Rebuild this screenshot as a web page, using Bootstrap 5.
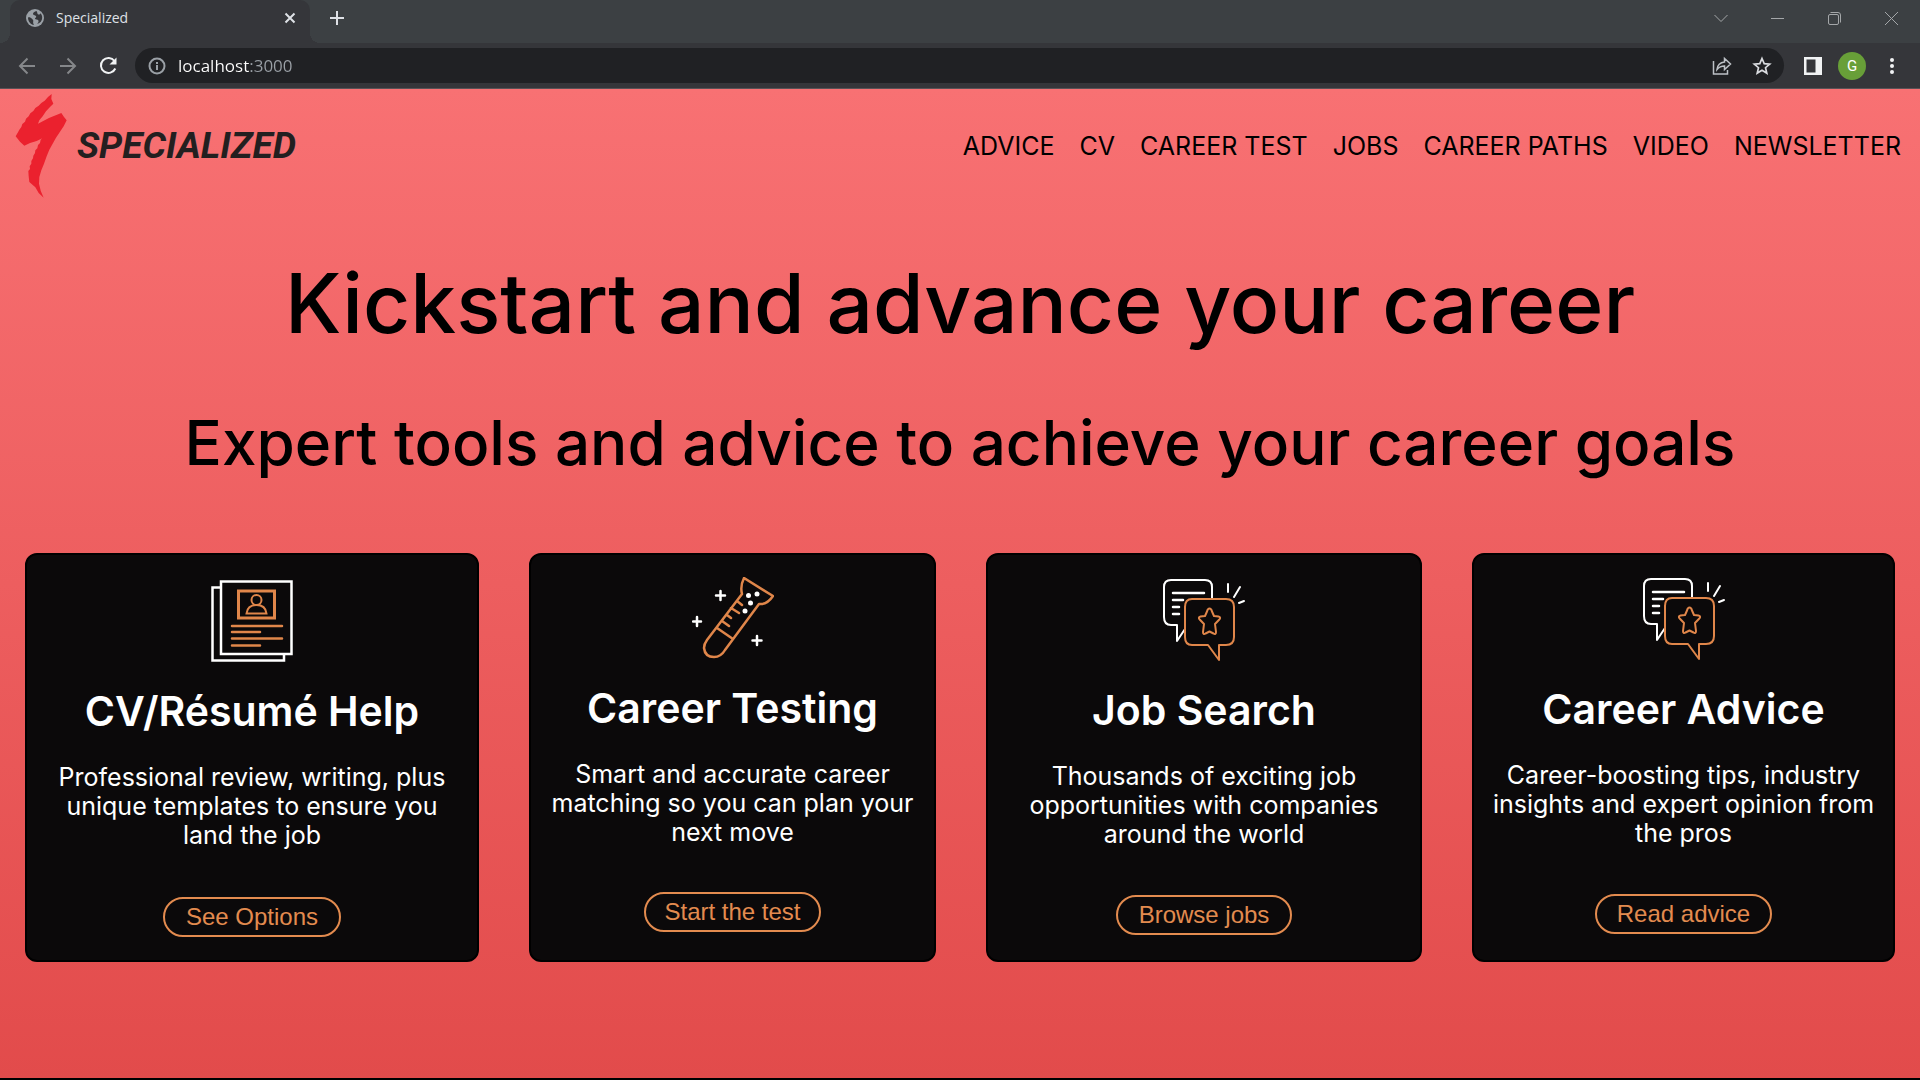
<!DOCTYPE html>
<html lang="en">
<head>
<meta charset="utf-8">
<meta name="viewport" content="width=device-width, initial-scale=1">
<title>Specialized</title>
<link href="https://cdn.jsdelivr.net/npm/bootstrap@5.3.0/dist/css/bootstrap.min.css" rel="stylesheet">
<style>
  body { font-family: Inter, "Open Sans", sans-serif; color: #000; background: #35363a; }
  svg { display: block; flex: none; }

  /* browser window */
  .tab-strip { background: #3c4043; height: 43px; padding-left: 10px; }
  .page-tab { position: relative; width: 300px; background: #35363a; border-radius: 10px 10px 0 0; padding: 0 13px 0 16px; color: #dee1e6; font: 14px/20px "Open Sans", sans-serif; }
  .page-tab::before, .page-tab::after { content: ""; position: absolute; bottom: 0; width: 10px; height: 10px; }
  .page-tab::before { right: 100%; background: radial-gradient(circle at 0 0, #3c4043 10px, #35363a 10px); }
  .page-tab::after { left: 100%; background: radial-gradient(circle at 100% 0, #3c4043 10px, #35363a 10px); }
  .tool-btn { background: none; border: 0; padding: 0; display: flex; align-items: center; justify-content: center; flex: none; }
  .win-btn { width: 57px; height: 36px; }
  .toolbar-row { background: #35363a; height: 46px; padding: 0 26px 0 16px; border-bottom: 1px solid #5a5256; }
  .nav-icons { width: 119px; gap: 19px; }
  .address-bar { background: #202124; height: 35px; border-radius: 18px; padding: 0 12px 0 13px; }
  .address-input { border: 0; outline: 0; padding: 0; min-width: 0; font: 17px/24px "Open Sans", sans-serif; color: transparent; -webkit-background-clip: text; background-clip: text; background-image: linear-gradient(90deg, #fff 76px, #9aa0a6 76px); }
  .avatar-btn { width: 28px; height: 28px; border-radius: 50%; background: #689f38; color: #fff; font: 15px/28px Roboto, sans-serif; }

  /* site */
  .site { background: linear-gradient(#f87173, #e24b4b); border-bottom: 2px solid #000; }
  .site-header { padding: 4px 19px 4px 15px; }
  .brand-link { color: #231f20; gap: 9px; text-decoration: none; }
  .wordmark { font: italic bold 37px/44px Roboto, "Liberation Sans", sans-serif; }
  .site-nav { gap: 25px; }
  .site-nav a { color: #000; text-decoration: none; font-size: 25px; line-height: 30px; }
  .hero-title { font-size: 82px; line-height: 98px; font-weight: 500; margin: 52px 0; }
  .hero-sub { font-size: 62px; line-height: 76px; font-weight: 500; margin: 0 0 72px; }
  .tile-grid { display: grid; grid-template-columns: 454fr 407fr 436fr 423fr; gap: 50px; padding: 0 25px; }
  .tile { background: #0b090a; border: 2px solid #000; border-radius: 12px; padding: 5% 14px; color: #fff; }
  .tile-cell { display: flex; }
  .tile-icon { margin: 2px 0 25px; }
  .tile-title { font-size: 41px; line-height: 49px; font-weight: 600; margin: 0 0 27px; }
  .tile-text { font-size: 25px; line-height: 29px; margin: 0 0 26px; }
  .tile-btn { margin-top: 5%; padding: 1% 5%; border: 2px solid #e38b4f; border-radius: 20px; background: none; color: #e38b4f; font: 24px/28px "Liberation Sans", Arial, sans-serif; }
</style>
</head>
<body class="min-vh-100 d-flex flex-column">

<svg width="0" height="0" class="position-absolute" aria-hidden="true">
  <symbol id="chat-star" viewBox="0 0 82 82">
    <g fill="none" stroke-linecap="round" stroke-linejoin="round" stroke-width="2">
      <g stroke="#fff">
        <path d="M49 19V8q0-7-7-7H8Q1 1 1 8v30q0 8 7 8h6v16l8-12"/>
        <path stroke-width="2.500" d="M10 14h31M10 21h10M10 28h6M10 35h6"/>
        <path d="M65 5v8M77 8l-6 10M76 24l5-2"/>
      </g>
      <g stroke="#e0864a">
        <path d="M29 20h34q8 0 8 8v30q0 8-8 8h-7v15L45 66H29q-7 0-7-8V28q0-8 7-8z"/>
        <path d="M46.500 29.500c1 0 2 1 2.500 3l2 4.500 4.500.5c2 .3 2 2 .8 3L52 45l1 8c0 2-1 2.500-2.500 1.500l-4-2-4 2C41 55.500 40 55 40 53l1-8-4.300-4.500c-1.200-1-1.200-2.700.8-3l4.500-.5 2-4.500C44.500 30.500 45.500 29.500 46.500 29.500z"/>
      </g>
    </g>
  </symbol>
</svg>

<div class="tab-strip d-flex">
  <div class="page-tab d-flex align-items-center pb-2">
    <svg width="18" height="18" viewBox="0 0 18 18"><circle cx="9" cy="9" r="9" fill="#9aa0a6"/><path d="M10.500 2c-2 .6-3.600 1.500-3.500 3 .2 1.600 3 1 3.200 2.500.2 1-1.500 1.300-1.200 2.300.4 1.200 2.700.4 3.400 1.700.5 1-.2 2.300-1.200 3.500 3-.8 5-3.200 5-6.200 0-1.700-.6-3.200-1.700-4.500-.3 1-1.200 1.500-2.200 1.200C11 5.100 11.600 3 10.500 2zM2 8.500c1.500-.5 3 .2 4 1.300 1 1 1.700 1.700 1.200 3C6.900 14 7.500 15 8 16 4.500 15.600 2 12.500 2 8.500z" fill="#35363a"/></svg>
    <span class="ms-2 ps-1 me-auto">Specialized</span>
    <button class="tool-btn" aria-label="Close tab"><svg width="14" height="14" viewBox="0 0 14 14" stroke="#dee1e6" stroke-width="2"><path d="M2.500 2.500l9 9M11.500 2.500l-9 9"/></svg></button>
  </div>
  <button class="tool-btn ms-3 ps-1 pb-2" aria-label="New tab"><svg width="14" height="14" viewBox="0 0 14 14" stroke="#dee1e6" stroke-width="2"><path d="M7 0v14M0 7h14"/></svg></button>
  <div class="d-flex ms-auto">
    <button class="tool-btn win-btn" aria-label="Search tabs"><svg width="14" height="14" viewBox="0 0 14 14" fill="none" stroke="#a4a7a9"><path d="M.5 4L7 10.500 13.500 4"/></svg></button>
    <button class="tool-btn win-btn" aria-label="Minimize"><svg width="13" height="13" viewBox="0 0 13 13" stroke="#a4a7a9"><path d="M0 6.500h13"/></svg></button>
    <button class="tool-btn win-btn" aria-label="Restore"><svg width="13" height="13" viewBox="0 0 13 13" fill="none" stroke="#a4a7a9"><rect x=".5" y="2.500" width="10" height="10" rx="1.500"/><path d="M2.500.5H10q2.500 0 2.500 2.500v7.500"/></svg></button>
    <button class="tool-btn win-btn" aria-label="Close window"><svg width="13" height="13" viewBox="0 0 13 13" stroke="#a4a7a9"><path d="M0 0l13 13M13 0L0 13"/></svg></button>
  </div>
</div>

<div class="toolbar-row d-flex align-items-center">
  <div class="nav-icons d-flex">
    <button class="tool-btn" aria-label="Back"><svg width="22" height="22" viewBox="0 0 22 22" fill="none" stroke="#85878a" stroke-width="2"><path d="M19 11H4M11.500 3.500L4 11l7.500 7.500"/></svg></button>
    <button class="tool-btn" aria-label="Forward"><svg width="22" height="22" viewBox="0 0 22 22" fill="none" stroke="#85878a" stroke-width="2"><path d="M3 11h15M10.500 3.500L18 11l-7.500 7.500"/></svg></button>
    <button class="tool-btn" aria-label="Reload"><svg width="20" height="20" viewBox="0 0 20 20" fill="none" stroke="#f1f3f4" stroke-width="2"><path d="M16.500 5A7.500 7.500 0 1 0 17.300 12.500"/><path d="M18.500 1.500V8.500H11.500z" fill="#f1f3f4" stroke="none"/></svg></button>
  </div>
  <div class="address-bar d-flex align-items-center flex-grow-1">
    <svg width="18" height="18" viewBox="0 0 18 18" fill="none" stroke="#9aa0a6" stroke-width="2"><circle cx="9" cy="9" r="7.500"/><path d="M9 8v5M9 5v2"/></svg>
    <input class="address-input flex-grow-1 ms-2 ps-1" type="text" value="localhost:3000" aria-label="Address">
    <button class="tool-btn" aria-label="Share"><svg width="20" height="20" viewBox="0 0 20 20" fill="none" stroke="#bdc1c6" stroke-width="1.500"><path d="M1.500 5v13h14v-4"/><path d="M5 13.500C5.500 9 8 6.500 12.500 6V2.500L18.500 8l-6 5.500V10C9 10 7 11 5 13.500z"/></svg></button>
    <button class="tool-btn ms-3 ps-1" aria-label="Bookmark"><svg width="20" height="20" viewBox="0 0 20 20" fill="none" stroke="#dadce0" stroke-width="1.700"><path d="M10 2.500l2.200 5.100 5.500.5-4.200 3.600 1.300 5.400L10 14.200l-4.800 2.900 1.300-5.400L2.300 8.100l5.500-.5z"/></svg></button>
  </div>
  <button class="tool-btn ms-3 ps-1" aria-label="Side panel"><svg width="18" height="18" viewBox="0 0 18 18" fill="#f1f3f4"><path fill-rule="evenodd" d="M0 0h18v18H0zM2.500 2.500v13h9v-13z"/></svg></button>
  <button class="tool-btn avatar-btn ms-3" aria-label="Profile">G</button>
  <button class="tool-btn ms-4" aria-label="Menu"><svg width="4" height="18" viewBox="0 0 4 18" fill="#f1f3f4"><circle cx="2" cy="3" r="2"/><circle cx="2" cy="9" r="2"/><circle cx="2" cy="15" r="2"/></svg></button>
</div>

<div class="site flex-grow-1">
  <header class="site-header d-flex align-items-center justify-content-between">
    <a href="#" class="brand-link d-flex align-items-center">
      <svg width="53" height="106" viewBox="45 280 159 318" fill="#eb212e"><path d="M155 283L154 298 160 312 150 322 138 335 128 350 118 362 114 372Q145 354 184 340L192 352 200 362 191 380 180 396 168 414 158 432 148 450 140 470 132 492 124 512 118 532 117 552Q120 572 131 594L116 580 106 563 88 547 86 530 85 514 90 508 89 500 94 492 94 484 99 476 100 468 105 460 106 452 112 446 114 436 120 430 122 420 127 416 110 424 90 430 73 438 60 426 47 410 54 398 58 390 64 382 67 373 75 366 78 357 86 350 91 341 100 334 106 325 116 318 124 310 134 303 144 292Z"/></svg>
      <span class="wordmark">SPECIALIZED</span>
    </a>
    <nav class="site-nav d-flex">
      <a href="#">ADVICE</a>
      <a href="#">CV</a>
      <a href="#">CAREER TEST</a>
      <a href="#">JOBS</a>
      <a href="#">CAREER PATHS</a>
      <a href="#">VIDEO</a>
      <a href="#">NEWSLETTER</a>
    </nav>
  </header>

  <main class="text-center">
    <h1 class="hero-title">Kickstart and advance your career</h1>
    <h2 class="hero-sub">Expert tools and advice to achieve your career goals</h2>

    <div class="tile-grid">
      <div class="tile-cell">
        <section class="tile w-100">
          <svg class="tile-icon mx-auto" width="82" height="82" viewBox="0 0 82 82" fill="none" stroke-width="2">
            <path stroke="#fff" stroke-width="2.500" d="M9 7.500H1.500v73H73V75M10 1.500h70.500V74H10z"/>
            <g stroke="#e0864a" stroke-linecap="round"><path stroke-width="3" d="M27.500 11h36v27h-36z"/><circle cx="45.500" cy="20" r="5"/><path d="M35.500 33.500q1-8.500 10-8.500t10 8.500z"/><path stroke-width="2.500" d="M21 46h50M21 52h28M21 58.500h50M21 65.500h28"/></g>
          </svg>
          <h3 class="tile-title">CV/Résumé Help</h3>
          <p class="tile-text">Professional review, writing, plus unique templates to ensure you land the job</p>
          <button class="tile-btn">See Options</button>
        </section>
      </div>
      <div class="tile-cell">
        <section class="tile w-100">
          <svg class="tile-icon mx-auto" width="82" height="82" viewBox="0 0 82 82" fill="none" stroke-width="2.500" stroke-linecap="round" stroke-linejoin="round">
            <path stroke="#e0864a" d="M52 1l29 18q-6 9-14 8L33 73q-4 7-11 7-9 0-10-9 0-4 3-8L50 17q-2-8 2-16zM25 51l16 11M45 24l5 4M39 31l8 5M35 38l4 3M30 44l7 5"/>
            <path stroke="#fff" d="M28.500 14v9M24 18.500h9M5 40v9M1 44.500h8M65 59v9M60.500 63.500h9"/>
            <g fill="#fff"><circle cx="56.500" cy="18.500" r="2.500"/><circle cx="65" cy="17" r="2.500"/><circle cx="58.500" cy="26" r="2.500"/><circle cx="53" cy="34" r="2.500"/></g>
          </svg>
          <h3 class="tile-title">Career Testing</h3>
          <p class="tile-text">Smart and accurate career matching so you can plan your next move</p>
          <button class="tile-btn">Start the test</button>
        </section>
      </div>
      <div class="tile-cell">
        <section class="tile w-100">
          <svg class="tile-icon mx-auto" width="82" height="82"><use href="#chat-star"/></svg>
          <h3 class="tile-title">Job Search</h3>
          <p class="tile-text">Thousands of exciting job opportunities with companies around the world</p>
          <button class="tile-btn">Browse jobs</button>
        </section>
      </div>
      <div class="tile-cell">
        <section class="tile w-100">
          <svg class="tile-icon mx-auto" width="82" height="82"><use href="#chat-star"/></svg>
          <h3 class="tile-title">Career Advice</h3>
          <p class="tile-text">Career-boosting tips, industry insights and expert opinion from the pros</p>
          <button class="tile-btn">Read advice</button>
        </section>
      </div>
    </div>
  </main>
</div>

<script src="https://cdn.jsdelivr.net/npm/bootstrap@5.3.0/dist/js/bootstrap.bundle.min.js"></script>
</body>
</html>
